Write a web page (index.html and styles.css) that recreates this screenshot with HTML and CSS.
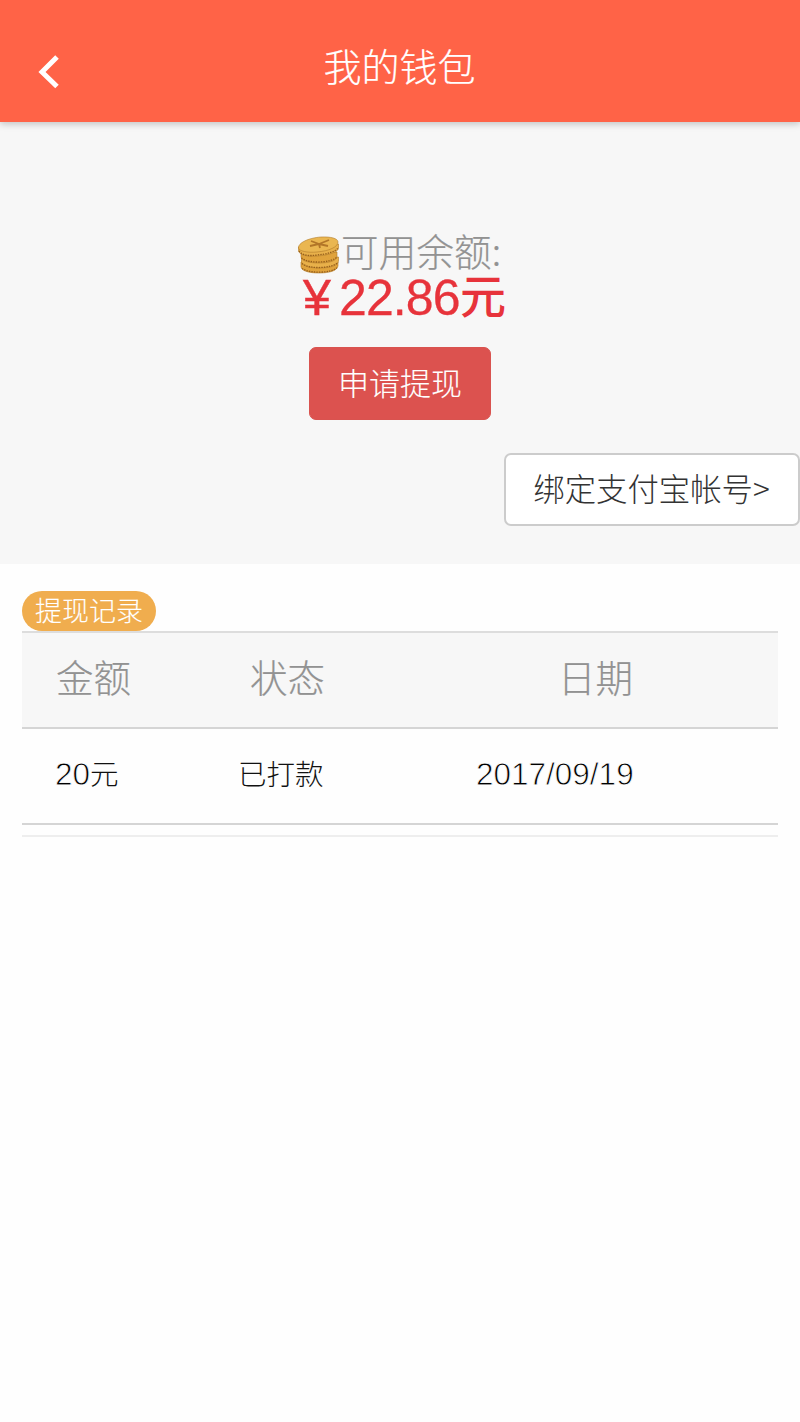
FILE: index.html
```html
<!DOCTYPE html>
<html lang="zh-CN">
<head>
<meta charset="utf-8">
<title>我的钱包</title>
<link rel="stylesheet" href="styles.css">
</head>
<body>
<header class="topbar">
  <svg class="back" viewBox="0 0 24 36" width="24" height="36"><path d="M21 3 6 18l15 14.500" fill="none" stroke="#fff" stroke-width="5"/></svg>
  <h1 class="title">我的钱包</h1>
</header>
<main>
  <section class="wallet">
    <div class="label">
      <svg class="coins" viewBox="0 0 44 40" width="44" height="40">
        <g fill="#e0a33c" stroke="#b07a2a" stroke-width=".6">
          <path d="M4 27v5c1 4 8 6 18 6s18-2 19-7v-4z"/>
          <path d="M4.500 22v5c1 4 8 6 18 6s18-2 19-7v-4z" fill="#e8b04a"/>
          <path d="M4 17v5c1 4 8 6 18 6s18-2 18-7v-4z"/>
          <path d="M1.500 12v4c1 4 9 6 19 5 12-1 21-4 21-8V9z" fill="#e8b04a"/>
          <path d="M1.500 13C1 8 11 3 24 2c10-.5 17 1.500 17 5 0 5-9 9-21 10-10 1-18-1-18.500-4z" fill="#eab650"/>
        </g>
        <g fill="none" stroke="#965f1c" stroke-width="1.300" stroke-dasharray="1.400 1.100">
          <path d="M2 16c4 5 11 5 18 4 10-1 18-3 21-7M4.500 23c7 6 30 5 35.500-1M5 28.500c7 6 30 5 36-1M5 33.500c7 5 30 5 35-1"/>
        </g>
        <path d="m14 6 8 3-9 2m9-2 10-4m-10 4 9 2m-9-2 1 4" fill="none" stroke="#b27628" stroke-width="1.800"/>
      </svg>
      <span class="label-text">可用余额:</span>
    </div>
    <div class="amount"><span class="yen">¥</span><span class="number">22.86</span><span class="unit">元</span></div>
    <button class="withdraw">申请提现</button>
    <button class="bind">绑定支付宝帐号&gt;</button>
  </section>
  <section class="records">
    <span class="badge">提现记录</span>
    <div class="row head"><span class="money">金额</span><span class="state">状态</span><span class="date">日期</span></div>
    <div class="row item"><span class="money"><span class="digits">20</span>元</span><span class="state">已打款</span><span class="date digits">2017/09/19</span></div>
    <div class="end"></div>
  </section>
</main>
</body>
</html>
```
FILE: styles.css
```css
* { box-sizing: border-box; }
body {
  margin: 0;
  min-height: 1422px;
  background: #fefefe;
  font-family: "Noto Sans CJK SC", sans-serif;
  font-weight: 300;
}
button { font: inherit; display: block; padding: 0; }
.topbar {
  height: 122px;
  position: relative;
  display: flex;
  align-items: flex-start;
  padding: 54px 0 0 36px;
  background: #ff6347;
  box-shadow: 0 2px 7px rgba(0, 0, 0, .22);
}
.back { display: block; }
.title {
  flex: 1;
  margin: -17px 61px 0 0;
  text-align: center;
  font-size: 38px;
  line-height: 56px;
  font-weight: 300;
  color: #fff;
  -webkit-text-stroke: .2px #fff;
}
.wallet {
  height: 442px;
  padding-top: 104px;
  background: #f7f7f7;
}
.label {
  display: flex;
  padding-left: 297px;
  height: 48px;
  color: #929292;
  font-size: 37.5px;
  line-height: 47px;
  -webkit-text-stroke: .2px #929292;
}
.coins { margin-top: 9px; }
.label-text { white-space: nowrap; letter-spacing: .2px; }
.amount {
  display: flex;
  height: 52px;
  padding-left: 302px;
  font-family: "Liberation Sans", sans-serif;
  font-size: 50px;
  line-height: 49px;
  font-weight: 400;
  color: #e7333b;
}
.yen { width: 37px; padding-left: 1px; -webkit-text-stroke: .5px #e7333b; }
.number { width: 121px; letter-spacing: -.9px; -webkit-text-stroke: .3px #e7333b; }
.unit { font: 500 46px/39px "Noto Sans CJK SC", sans-serif; }
.withdraw {
  width: 182px;
  height: 73px;
  margin: 21px 0 0 309px;
  padding-bottom: 4px;
  border: 1px solid #d9534f;
  border-radius: 7px;
  background: #dc524f;
  color: #fff;
  font-size: 31px;
  -webkit-text-stroke: .1px #fff;
}
.bind {
  width: 296px;
  height: 73px;
  margin: 33px 0 0 504px;
  padding: 0 1px 4px 0;
  border: 2px solid #ccc;
  border-radius: 7px;
  background: #fff;
  color: #333;
  font-size: 31.400px;
  white-space: nowrap;
}
.records { padding: 27px 22px 0; }
.badge {
  display: block;
  width: 134px;
  height: 40px;
  border-radius: 20px;
  background: #f0ad4e;
  color: #fff;
  font-size: 27px;
  line-height: 38px;
  text-align: center;
  -webkit-text-stroke: .1px #fff;
}
.row {
  display: grid;
  grid-template-columns: 182px 239px 1fr;
  height: 96px;
}
.head {
  border-top: 2px solid #ddd;
  background: #f7f7f7;
  color: #929292;
  font-size: 37.500px;
  line-height: 86px;
  -webkit-text-stroke: .2px #929292;
}
.head .money { padding-left: 34px; }
.head .state { padding-left: 46px; }
.head .date { padding-left: 115px; }
.item {
  border-top: 2px solid #d5d5d5;
  border-bottom: 2px solid #d5d5d5;
  height: 98px;
  color: #111;
  font-size: 28.500px;
  line-height: 88px;
}
.item .money { padding-left: 33px; }
.item .state { padding-left: 34px; }
.item .date {
  padding-left: 33px;
  line-height: 91px;
}
.digits {
  font-family: "Liberation Sans", sans-serif;
  font-size: 31.500px;
  color: #000;
  -webkit-text-stroke: .8px #fefefe;
}
.end { height: 12px; border-bottom: 2px solid #eee; }
```
